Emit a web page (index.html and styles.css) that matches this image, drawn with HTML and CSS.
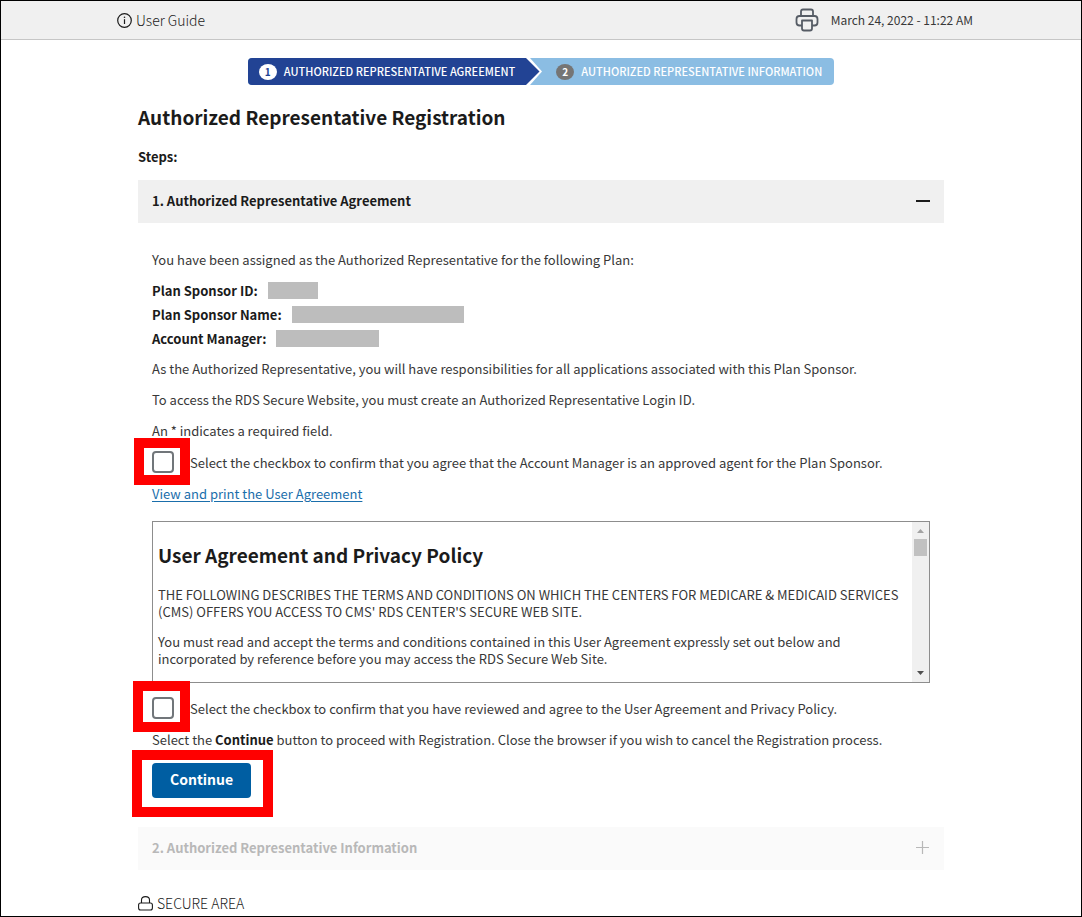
FILE: index.html
```html
<!DOCTYPE html>
<html lang="en">
<head>
<meta charset="utf-8">
<meta name="viewport" content="width=device-width, initial-scale=1">
<title>Authorized Representative Registration</title>
<link rel="stylesheet" href="styles.css">
</head>

<body>
<header class="topbar">
  <div class="topbar-inner">
    <a class="guide" href="#guide">
      <svg width="15" height="15" viewBox="0 0 15 15" fill="none" stroke="currentColor" aria-hidden="true">
        <circle cx="7.5" cy="7.5" r="6.8" stroke-width="1.2"/>
        <path d="M7.5 6.2V11" stroke-width="1.2"/>
        <circle cx="7.5" cy="4.2" r=".8" fill="currentColor" stroke="none"/>
      </svg>
      User Guide
    </a>
    <div class="topbar-right">
      <button class="print" type="button" aria-label="Print">
        <svg width="24" height="24" viewBox="0 0 24 24" fill="none" stroke="currentColor" stroke-width="1.8" stroke-linejoin="round">
          <path d="M6 8V3.5Q6 1.5 8 1.5H16Q18 1.5 18 3.5V8"/>
          <path d="M7 17.5H4.5Q1.5 17.5 1.5 14.5V11Q1.5 8 4.5 8H19.5Q22.5 8 22.5 11V14.5Q22.5 17.5 19.5 17.5H17"/>
          <path d="M7 12.5H17V20.5Q17 22.5 15 22.5H9Q7 22.5 7 20.5Z"/>
        </svg>
      </button>
      <span class="date">March 24, 2022 - 11:22 AM</span>
    </div>
  </div>
</header>

<main class="page">
  <ol class="stepper">
    <li class="step step-current"><span class="step-num">1</span>AUTHORIZED REPRESENTATIVE AGREEMENT</li>
    <li class="step-arrow" aria-hidden="true">
      <svg width="17" height="27" viewBox="0 0 17 27">
        <path d="M0 0H4L16 13.5L4 27H0Z" fill="#fff"/>
        <path d="M0 0L13.5 13.5L0 27Z" fill="#224394"/>
      </svg>
    </li>
    <li class="step"><span class="step-num">2</span>AUTHORIZED REPRESENTATIVE INFORMATION</li>
  </ol>

  <h1>Authorized Representative Registration</h1>
  <p class="steps-label">Steps:</p>

  <h2 class="panel-head">
    <button type="button" aria-expanded="true">
      1. Authorized Representative Agreement
      <svg width="15" height="15" viewBox="0 0 15 15" stroke="currentColor" stroke-width="2" aria-hidden="true"><path d="M1 8H15"/></svg>
    </button>
  </h2>

  <form class="panel-body">
    <p>You have been assigned as the Authorized Representative for the following Plan:</p>

    <dl class="plan">
      <div><dt>Plan Sponsor ID:</dt><dd class="redacted id"></dd></div>
      <div><dt>Plan Sponsor Name:</dt><dd class="redacted name"></dd></div>
      <div><dt>Account Manager:</dt><dd class="redacted manager"></dd></div>
    </dl>

    <p>As the Authorized Representative, you will have responsibilities for all applications associated with this Plan Sponsor.</p>
    <p>To access the RDS Secure Website, you must create an Authorized Representative Login ID.</p>
    <p>An * indicates a required field.</p>

    <div class="check">
      <span class="marked mark-manager"><input type="checkbox" id="confirm-manager"></span>
      <label for="confirm-manager">Select the checkbox to confirm that you agree that the Account Manager is an approved agent for the Plan Sponsor.</label>
    </div>

    <p><a href="#agreement">View and print the User Agreement</a></p>

    <div class="agreement" id="agreement">
      <div class="agreement-text">
        <h3>User Agreement and Privacy Policy</h3>
        <p>THE FOLLOWING DESCRIBES THE TERMS AND CONDITIONS ON WHICH THE CENTERS FOR MEDICARE &amp; MEDICAID SERVICES (CMS) OFFERS YOU ACCESS TO CMS' RDS CENTER'S SECURE WEB SITE.</p>
        <p>You must read and accept the terms and conditions contained in this User Agreement expressly set out below and incorporated by reference before you may access the RDS Secure Web Site.</p>
      </div>
      <div class="scrollbar" aria-hidden="true">
        <svg width="7" height="4" viewBox="0 0 7 4"><path d="M0 4L3.5 0L7 4Z" fill="#a3a3a3"/></svg>
        <span class="thumb"></span>
        <svg class="down" width="7" height="4" viewBox="0 0 7 4"><path d="M0 0L3.5 4L7 0Z" fill="#505050"/></svg>
      </div>
    </div>

    <div class="check">
      <span class="marked mark-policy"><input type="checkbox" id="confirm-policy"></span>
      <label for="confirm-policy">Select the checkbox to confirm that you have reviewed and agree to the User Agreement and Privacy Policy.</label>
    </div>

    <p>Select the <strong>Continue</strong> button to proceed with Registration. Close the browser if you wish to cancel the Registration process.</p>

    <span class="marked mark-continue"><button class="continue" type="button">Continue</button></span>
  </form>

  <h2 class="panel-head">
    <button type="button" aria-expanded="false" disabled>
      2. Authorized Representative Information
      <svg width="15" height="15" viewBox="0 0 15 15" stroke="currentColor" stroke-width="1.2" aria-hidden="true"><path d="M1 7.5H14M7.5 1V14"/></svg>
    </button>
  </h2>

  <p class="secure">
    <svg width="15" height="16" viewBox="0 0 15 16" fill="none" stroke="currentColor" stroke-width="1.1" aria-hidden="true">
      <rect x=".6" y="7" width="13.8" height="7" rx="2"/>
      <path d="M3.5 7V4Q3.5 .6 7.5 .6Q11.5 .6 11.5 4V7"/>
    </svg>
    SECURE AREA
  </p>
</main>
</body>
</html>
```
FILE: styles.css
```css
* {
  box-sizing: border-box;
}

body {
  margin: 0;
  min-height: 100vh;
  border: 1px solid #000;
  background: #fff;
  color: #383838;
  font-family: "Noto Sans CJK SC", "Noto Sans", sans-serif;
  font-size: 13px;
  font-weight: 400;
  line-height: 17px;
}

h1, h2, h3, p, dl, dd, ol {
  margin: 0;
}

button {
  border: 0;
  background: none;
  font: inherit;
  color: inherit;
}

a {
  color: #1a6eab;
  text-underline-offset: 2px;
}

h1, h2, h3, strong, dt {
  color: #1b1b1b;
  font-weight: 700;
}

/* top bar */
.topbar {
  background: #f0f0f0;
  border-bottom: 1px solid #c6c6c6;
}

.topbar-inner {
  display: flex;
  align-items: center;
  justify-content: space-between;
  max-width: 864px;
  height: 38px;
  margin: 0 auto;
  padding-left: 8px;
}

.guide {
  display: flex;
  align-items: center;
  gap: 4px;
  color: #1b1b1b;
  font-size: 14px;
  font-weight: 300;
  text-decoration: none;
}

.topbar-right {
  display: flex;
  align-items: center;
  gap: 12px;
  font-size: 12px;
}

.date {
  padding-bottom: 2px;
}

.print {
  display: flex;
  padding: 0;
  color: #565c65;
}

.page {
  max-width: 806px;
  margin: 0 auto;
  padding-top: 18px;
}

/* progress steps */
.stepper {
  display: flex;
  width: fit-content;
  margin: 0 auto;
  padding: 0;
  overflow: hidden;
  border-radius: 4px;
  background: #8bbde3;
  color: #fff;
  font-size: 11px;
  font-weight: 500;
  list-style: none;
}

.step {
  display: flex;
  align-items: center;
  gap: 7px;
  height: 27px;
  padding: 0 12px 0 13px;
}

.step-current {
  padding: 0 11px;
  background: #224394;
}

.step-arrow {
  display: flex;
}

.step-num {
  width: 18px;
  border-radius: 50%;
  background: #757575;
  font-size: 10px;
  font-weight: 700;
  line-height: 16px;
  text-align: center;
}

.step-current .step-num {
  background: #fff;
  color: #224394;
}

h1, h3 {
  font-size: 19px;
  line-height: 26px;
}

h1 {
  margin-top: 19px;
}

.steps-label {
  margin: 18px 0 15px;
  color: #1b1b1b;
  font-weight: 700;
}

/* accordion */
.panel-head {
  font-size: 13px;
}

.panel-head button {
  display: flex;
  align-items: center;
  justify-content: space-between;
  width: 100%;
  height: 43px;
  padding: 0 14px 2px;
  background: #f0f0f0;
}

.panel-head button:disabled {
  background: #fafafa;
  color: #b8b8b8;
}

.panel-body {
  display: flex;
  flex-direction: column;
  align-items: flex-start;
  gap: 14px;
  padding: 28px 14px 29px;
}

.plan div {
  display: flex;
  align-items: center;
  gap: 10px;
  height: 24px;
}

.plan {
  margin: -4px 0;
}

.redacted {
  height: 17px;
  background: #bdbdbd;
}

.id {
  width: 50px;
}

.name {
  width: 172px;
}

.manager {
  width: 103px;
}

.check {
  display: flex;
  align-items: center;
  gap: 16px;
  height: 18px;
}

.check input {
  appearance: none;
  display: block;
  width: 22px;
  height: 22px;
  margin: 0;
  border: 2px solid #71767a;
  border-radius: 4px;
  background: #fff;
}

/* red callout frames drawn over the controls */
.marked {
  position: relative;
}

.marked::after {
  content: "";
  position: absolute;
  border: 10px solid #f00;
  pointer-events: none;
}

.mark-manager::after {
  inset: -13px -16px -12px -18px;
}

.mark-policy::after {
  inset: -16px -16px -13px -19px;
}

.mark-continue::after {
  inset: -13px -22px -19px -20px;
}

.agreement {
  display: flex;
  width: 100%;
  height: 162px;
  margin: 5px 0 2px;
  border: 1px solid #8d8d8d;
}

.agreement-text {
  flex: 1;
  padding: 20px 5px 0;
  overflow: hidden;
}

.agreement-text p {
  margin-top: 13px;
}

.agreement-text h3 {
  margin-bottom: 18px;
}

.scrollbar {
  display: flex;
  flex-direction: column;
  align-items: center;
  gap: 6px;
  width: 17px;
  padding: 7px 0;
  background: #f0f0f0;
}

.thumb {
  width: 13px;
  height: 17px;
  background: #c1c1c1;
}

.down {
  margin-top: auto;
}

.continue {
  display: block;
  height: 35px;
  margin-top: 1px;
  padding: 0 18px 2px;
  border-radius: 4px;
  background: #005ea2;
  color: #fff;
  font-size: 14px;
  font-weight: 700;
}

.mark-continue {
  display: flow-root;
}

.mark-continue::after {
  top: -12px;
}

.secure {
  display: flex;
  align-items: center;
  gap: 4px;
  margin-top: 25px;
  color: #1b1b1b;
  font-size: 14px;
  font-weight: 300;
}
```
